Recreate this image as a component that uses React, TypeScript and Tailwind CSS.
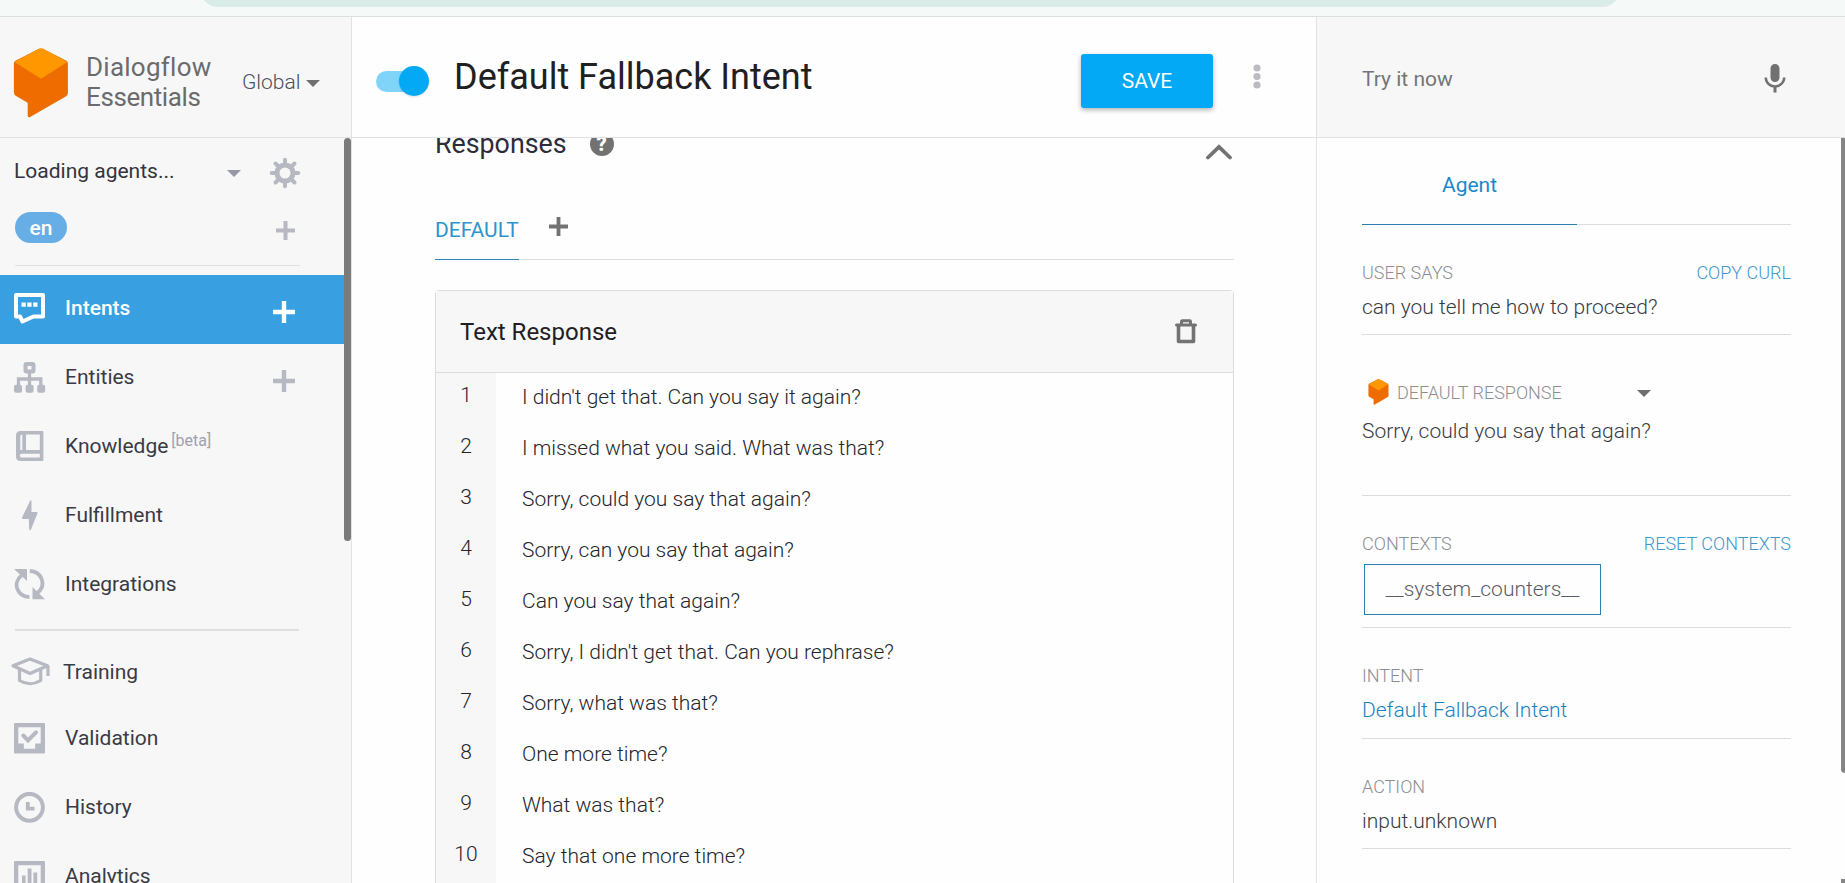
import type { ReactNode } from "react";
import { MdMic } from "react-icons/md";

function Logo({ className }: { className: string }) {
  return (
    <svg className={className} viewBox="0 0 56 71">
      <path
        d="M26 .8 L2 13 Q.5 14 .5 16 V45 Q.5 47.300 2.300 48.500 L14.500 55.500 V68.500 Q14.500 71 17 70 L53.500 49 Q55.300 48 55.300 45.500 V16 Q55.300 14 53.800 13 L30 .8 Q28 0 26 .8Z"
        fill="#ef6c00"
      />
      <path d="M26 .8 L1.200 14.300 L28 31.200 L54.600 14.300 L30 .8 Q28 0 26 .8Z" fill="#ff9800" />
    </svg>
  );
}

function Plus({ size, width }: { size: number; width: number }) {
  return (
    <svg width={size} height={size} viewBox={`0 0 ${size} ${size}`} className="shrink-0" stroke="currentColor" strokeWidth={width} strokeLinecap="butt">
      <path d={`M${size / 2} 0V${size}M0 ${size / 2}H${size}`} />
    </svg>
  );
}

function Caret({ className }: { className: string }) {
  return (
    <svg width="14" height="7" viewBox="0 0 14 7" className={className} fill="currentColor">
      <path d="M0 0H14L7 7Z" />
    </svg>
  );
}

const icons: Record<string, ReactNode> = {
  Intents: (
    <>
      <path d="M2 2H29V23.500H19.500L8.500 28.500L6 23.500H2Z" fill="none" stroke="currentColor" strokeWidth="4" strokeLinejoin="round" />
      <path d="M7.500 9.500h4.300v4.200h-4.300zM13.300 9.500h4.300v4.200h-4.300zM19.200 9.500h4.300v4.200h-4.300z" />
    </>
  ),
  Entities: (
    <>
      <rect x="11.500" y="2" width="8" height="7.500" rx="1" fill="none" stroke="currentColor" strokeWidth="4" />
      <path d="M15.500 11V24M4.500 24V17H26.800V24" fill="none" stroke="currentColor" strokeWidth="3.300" />
      <rect x="0" y="22.700" width="8" height="8" rx="2" />
      <rect x="11.600" y="22.700" width="8" height="8" rx="2" />
      <rect x="23.200" y="22.700" width="8" height="8" rx="2" />
    </>
  ),
  Knowledge: (
    <path
      fillRule="evenodd"
      d="M6.500 0H28.300Q29.400 0 29.400 1V29Q29.400 30 28.300 30H7Q2 30 2 25.500V4.500Q2 0 6.500 0ZM12 3.600V19H25.800V3.600ZM6.300 4.500V19H8.300V3.600ZM7.500 22.800Q5.800 22.800 5.800 24.500Q5.800 26.500 7.500 26.500H25.800V22.800Z"
    />
  ),
  Fulfillment: <path d="M16.500 0L8 17.500Q7.600 19 9 19H14.800L15.200 29.500Q16 31 17 29.500L23.400 13.500Q24 12 22.500 12H17.500V1Z" />,
  Integrations: (
    <>
      <path d="M15.500 28.200C2.500 27.500 -1.500 13.500 7.500 6.500M15.800 2C28.500 2.700 32.500 16.700 23.500 23.700" fill="none" stroke="currentColor" strokeWidth="3.800" />
      <path d="M0 0H13V12ZM31 30.200H18.500V18Z" />
    </>
  ),
  Validation: (
    <>
      <path fillRule="evenodd" d="M1 0H30Q31 0 31 1V29.500Q31 30.500 30 30.500H1Q0 30.500 0 29.500V1Q0 0 1 0ZM4.300 4.200V20.500H9.800V25.800H21.200V20.500H26.700V4.200Z" />
      <path d="M9.300 12.500L14 17.300L22 9.300" fill="none" stroke="currentColor" strokeWidth="4" strokeLinecap="round" />
    </>
  ),
  History: (
    <>
      <circle cx="15.500" cy="15.300" r="13.400" fill="none" stroke="currentColor" strokeWidth="4" />
      <path d="M13.800 10V16.700H20.500" fill="none" stroke="currentColor" strokeWidth="3.800" />
    </>
  ),
  Analytics: (
    <>
      <path fillRule="evenodd" d="M1 0H30Q31 0 31 1V29.500Q31 30.500 30 30.500H1Q0 30.500 0 29.500V1Q0 0 1 0ZM4.300 4.200V26.300H26.700V4.200Z" />
      <path d="M8 14.500h3.600V27H8zM13.700 7.500h3.800V27h-3.800zM19.400 11.500h3.800V27h-3.800z" />
    </>
  ),
};

function NavItem({ name, active, plus, beta }: { name: string; active?: boolean; plus?: boolean; beta?: boolean }) {
  return (
    <div className={`flex h-[69px] w-[344px] shrink-0 items-center pb-[3px] pl-[14px] ${active ? "bg-[#38a0e1] text-white" : "text-[#b6b9c2]"}`}>
      <svg width="32" height="31" viewBox="0 0 32 31" fill="currentColor" className="shrink-0">
        {icons[name]}
      </svg>
      <span className={`mt-px ml-[19px] ${active ? "font-medium text-white" : "text-[#3a3b45]"}`}>{name}</span>
      {beta && <span className="mb-[11px] ml-[3px] text-[16px] text-[#a0a1ac]">[beta]</span>}
      {plus && (
        <span className="mt-[7px] mr-[49px] ml-auto">
          <Plus size={22} width={4.4} />
        </span>
      )}
    </div>
  );
}

function Sidebar() {
  return (
    <aside className="relative flex w-[352px] shrink-0 flex-col border-r border-[#e2e2e4] bg-[#f7f7f7] text-[21px]">
      <div className="flex h-[66px] shrink-0 items-center pl-[14px]">
        <span className="mt-px w-[213px] text-[#33343e]">Loading agents...</span>
        <Caret className="mt-[5px] text-[#9697a6]" />
        <svg width="32" height="32" viewBox="-16 -16 32 32" className="mt-[3px] ml-[28px] text-[#b6b9c2]" stroke="currentColor" fill="none">
          <circle r="8" strokeWidth="5" />
          <path d="M0-9V-13.300M0 9V13.300M9 0H13.300M-9 0H-13.300M6.500 6.500L9.500 9.500M-6.500 6.500L-9.500 9.500M6.500-6.500L9.500-9.500M-6.500-6.500L-9.500-9.500" strokeWidth="4" strokeLinecap="round" />
        </svg>
      </div>
      <div className="mr-[51px] ml-[15px] flex h-[62px] shrink-0 items-start justify-between border-b border-[#e0e0e2] pt-2">
        <span className="flex h-[31px] w-[52px] items-center justify-center rounded-full bg-[#67ade6] pt-[2px] font-medium text-white">en</span>
        <span className="mt-[9px] mr-[5px] text-[#b6b9c2]">
          <Plus size={19} width={4} />
        </span>
      </div>
      <div className="h-[9px] shrink-0" />
      <NavItem name="Intents" active plus />
      <NavItem name="Entities" plus />
      <NavItem name="Knowledge" beta />
      <NavItem name="Fulfillment" />
      <NavItem name="Integrations" />
      <div className="mt-[9px] mr-[52px] mb-2 ml-[15px] h-[2px] shrink-0 bg-[#dfdfe1]" />
      <div className="flex h-[66px] shrink-0 items-center pl-[10px]">
        <svg width="41" height="30" viewBox="0 0 41 30" className="text-[#b6b9c2]" fill="none" stroke="currentColor" strokeWidth="3.200" strokeLinejoin="round">
          <path d="M3 8.700L20 2L37.500 8.700L20 16.500ZM38 9V19" />
          <path d="M9.500 12.500V23.500Q20 30 30.700 23.500V12.500" />
        </svg>
        <span className="mt-[2px] ml-3 text-[#3a3b45]">Training</span>
      </div>
      <NavItem name="Validation" />
      <NavItem name="History" />
      <NavItem name="Analytics" />
      <div className="absolute top-0 right-0 h-[403px] w-[7px] rounded-full bg-[#7b7b7b]" />
    </aside>
  );
}

const responses = [
  "I didn't get that. Can you say it again?",
  "I missed what you said. What was that?",
  "Sorry, could you say that again?",
  "Sorry, can you say that again?",
  "Can you say that again?",
  "Sorry, I didn't get that. Can you rephrase?",
  "Sorry, what was that?",
  "One more time?",
  "What was that?",
  "Say that one more time?",
];

function MainPanel() {
  return (
    <main className="min-w-0 flex-1 overflow-hidden bg-[#fefefe] pr-[82px] pl-[83px]">
      <div className="flex h-[50px] items-start justify-between">
        <div className="-mt-[11px] flex items-center text-[26.800px] leading-[34px] text-[#2c2d38]">
          Responses
          <span className="ml-[23px] flex size-6 items-center justify-center rounded-full bg-[#727272] text-[20px] font-black text-white">?</span>
        </div>
        <svg width="28" height="16" viewBox="0 0 28 16" className="mt-[6px] mr-px" fill="none" stroke="#737373" strokeWidth="3.800" strokeLinecap="round">
          <path d="M3 13.500L14 3L25 13.500" />
        </svg>
      </div>
      <div className="flex h-[72px] border-b border-[#dcdcde]">
        <div className="-mb-px border-b border-[#2b86b3] pt-[28px] text-[21px] leading-[28px] text-[#2d94cd]">DEFAULT</div>
        <span className="mt-[29px] ml-[30px] text-[#727272]">
          <Plus size={19} width={3.8} />
        </span>
      </div>
      <div className="mt-[30px] rounded-t-sm border border-[#dcdcde]">
        <div className="flex h-[82px] items-center justify-between border-b border-[#dcdcde] bg-[#f7f7f7] pr-[36px] pl-6 text-[24px] text-[#1f2023]">
          Text Response
          <svg width="22" height="25" viewBox="0 0 22 25" className="-mt-px" fill="none" stroke="#737373">
            <path d="M3.500 5V22.500H18.500V5" strokeWidth="3.600" strokeLinejoin="round" />
            <path d="M1.500 6H20.500" strokeWidth="3" strokeLinecap="round" />
            <path d="M6.500 5V2.500Q6.500 1.700 7.300 1.700H14.700Q15.500 1.700 15.500 2.500V5" strokeWidth="3" />
          </svg>
        </div>
        {responses.map((text, i) => (
          <div key={text} className="flex h-[51px] text-[21px] font-light text-[#25262b]">
            <span className="w-[60px] shrink-0 bg-[#f7f7f8] pt-2 text-center leading-[28px]">{i + 1}</span>
            <span className="ml-[26px] pt-[10px] leading-[28px]">{text}</span>
          </div>
        ))}
      </div>
    </main>
  );
}

function Label({ children, action }: { children: ReactNode; action?: string }) {
  return (
    <div className="flex h-7 items-center justify-between text-[18px] font-light text-[#8d8e93]">
      <span>{children}</span>
      {action && <span className="text-[#4099cb]">{action}</span>}
    </div>
  );
}

function TryPanel() {
  return (
    <aside className="relative w-[529px] shrink-0 border-l border-[#e2e2e4] bg-[#fefefe] pr-[54px] pl-[45px] text-[21px] font-light text-[#3a3b40]">
      <div className="flex h-[87px] border-b border-[#dcdcde]">
        <div className="-mb-px flex w-[215px] items-center justify-center border-b border-[#2d7cae] pt-[10px] font-normal text-[#1c87c9]">Agent</div>
      </div>
      <section className="h-[110px] border-b border-[#dcdcde] pt-[33px]">
        <Label action="COPY CURL">USER SAYS</Label>
        <p className="leading-[42px]">can you tell me how to proceed?</p>
      </section>
      <section className="h-[161px] border-b border-[#dcdcde] pt-[43px]">
        <div className="flex h-7 items-center text-[18px] text-[#8d8e93]">
          <Logo className="ml-[6px] h-[26px] w-[21px]" />
          <span className="ml-2 w-[240px] pt-px">DEFAULT RESPONSE</span>
          <Caret className="mt-[2px] text-[#6e6e6e]" />
        </div>
        <p className="leading-[50px]">Sorry, could you say that again?</p>
      </section>
      <section className="h-[132px] border-b border-[#dcdcde] pt-[33px]">
        <Label action="RESET CONTEXTS">CONTEXTS</Label>
        <div className="mt-[7px] ml-[2px] flex h-[51px] w-[237px] items-center justify-center border border-[#2b7fae] text-[#5b5c66]">__system_counters__</div>
      </section>
      <section className="h-[111px] border-b border-[#dcdcde] pt-[33px]">
        <Label>INTENT</Label>
        <p className="leading-[43px] text-[#1b82bf]">Default Fallback Intent</p>
      </section>
      <section className="h-[110px] border-b border-[#dcdcde] pt-[33px]">
        <Label>ACTION</Label>
        <p className="leading-[42px]">input.unknown</p>
      </section>
      <div className="absolute top-0 right-0 h-[635px] w-1 rounded-bl bg-[#858585]" />
      <div className="absolute right-0 bottom-0 h-1 w-1 bg-[#858585]" />
    </aside>
  );
}

function Header() {
  return (
    <header className="flex h-[121px] shrink-0 border-b border-[#e2e2e4] bg-[#fefefe]">
      <div className="flex w-[352px] shrink-0 border-r border-[#e2e2e4] bg-[#f7f7f7]">
        <Logo className="mt-[31px] ml-[13px] h-[70px] w-[56px]" />
        <div className="mt-[35px] ml-[17px] w-[156px] text-[26px] leading-[30px] text-[#6b6b6e]">
          <div className="tracking-[0.250px]">Dialogflow</div>
          <div className="tracking-[-0.400px]">Essentials</div>
        </div>
        <div className="mt-[52px] flex h-7 items-center text-[21px] font-light text-[#4e4f5a]">
          Global
          <Caret className="ml-[6px] text-[#707070]" />
        </div>
      </div>
      <div className="flex flex-1 items-start">
        <div className="mt-[49px] ml-6 flex h-[30px] w-[53px] items-center">
          <div className="h-[21px] w-[46px] rounded-full bg-[#80d4fa]" />
          <div className="-ml-[23px] size-[30px] shrink-0 rounded-full bg-[#03a9f4] shadow" />
        </div>
        <h1 className="mt-[40px] ml-[25px] text-[36px] leading-[40px] text-[#1f2022]">Default Fallback Intent</h1>
        <button className="mt-[37px] mr-[40px] ml-auto h-[54px] w-[132px] rounded-[3px] bg-[#03a9f4] pt-px text-[21px] text-white shadow-[0_2px_5px_rgba(0,0,0,0.3)]">SAVE</button>
        <svg width="8" height="26" viewBox="0 0 8 26" className="mt-[47px] mr-[55px]" fill="#bbbcc0">
          <circle cx="4" cy="4" r="3.600" />
          <circle cx="4" cy="12.500" r="3.600" />
          <circle cx="4" cy="21" r="3.600" />
        </svg>
      </div>
      <div className="flex w-[529px] shrink-0 items-start justify-between border-l border-[#e2e2e4] bg-[#f7f7f7] pr-[52px] pl-[45px]">
        <span className="mt-[48px] text-[21px] leading-[28px] text-[#757578]">Try it now</span>
        <MdMic size={36} color="#717171" className="mt-[44px]" />
      </div>
    </header>
  );
}

export default function App() {
  return (
    <div className="flex h-[883px] w-[1845px] flex-col overflow-hidden bg-white font-['Roboto',sans-serif]">
      <div className="flex h-[17px] shrink-0 items-start overflow-hidden border-b border-[#dae0de] bg-[#f5faf8]">
        <div className="-mt-[29px] ml-[200px] h-[36px] w-[1420px] rounded-full bg-[#daece7]" />
      </div>
      <Header />
      <div className="flex min-h-0 flex-1 overflow-hidden">
        <Sidebar />
        <MainPanel />
        <TryPanel />
      </div>
    </div>
  );
}
